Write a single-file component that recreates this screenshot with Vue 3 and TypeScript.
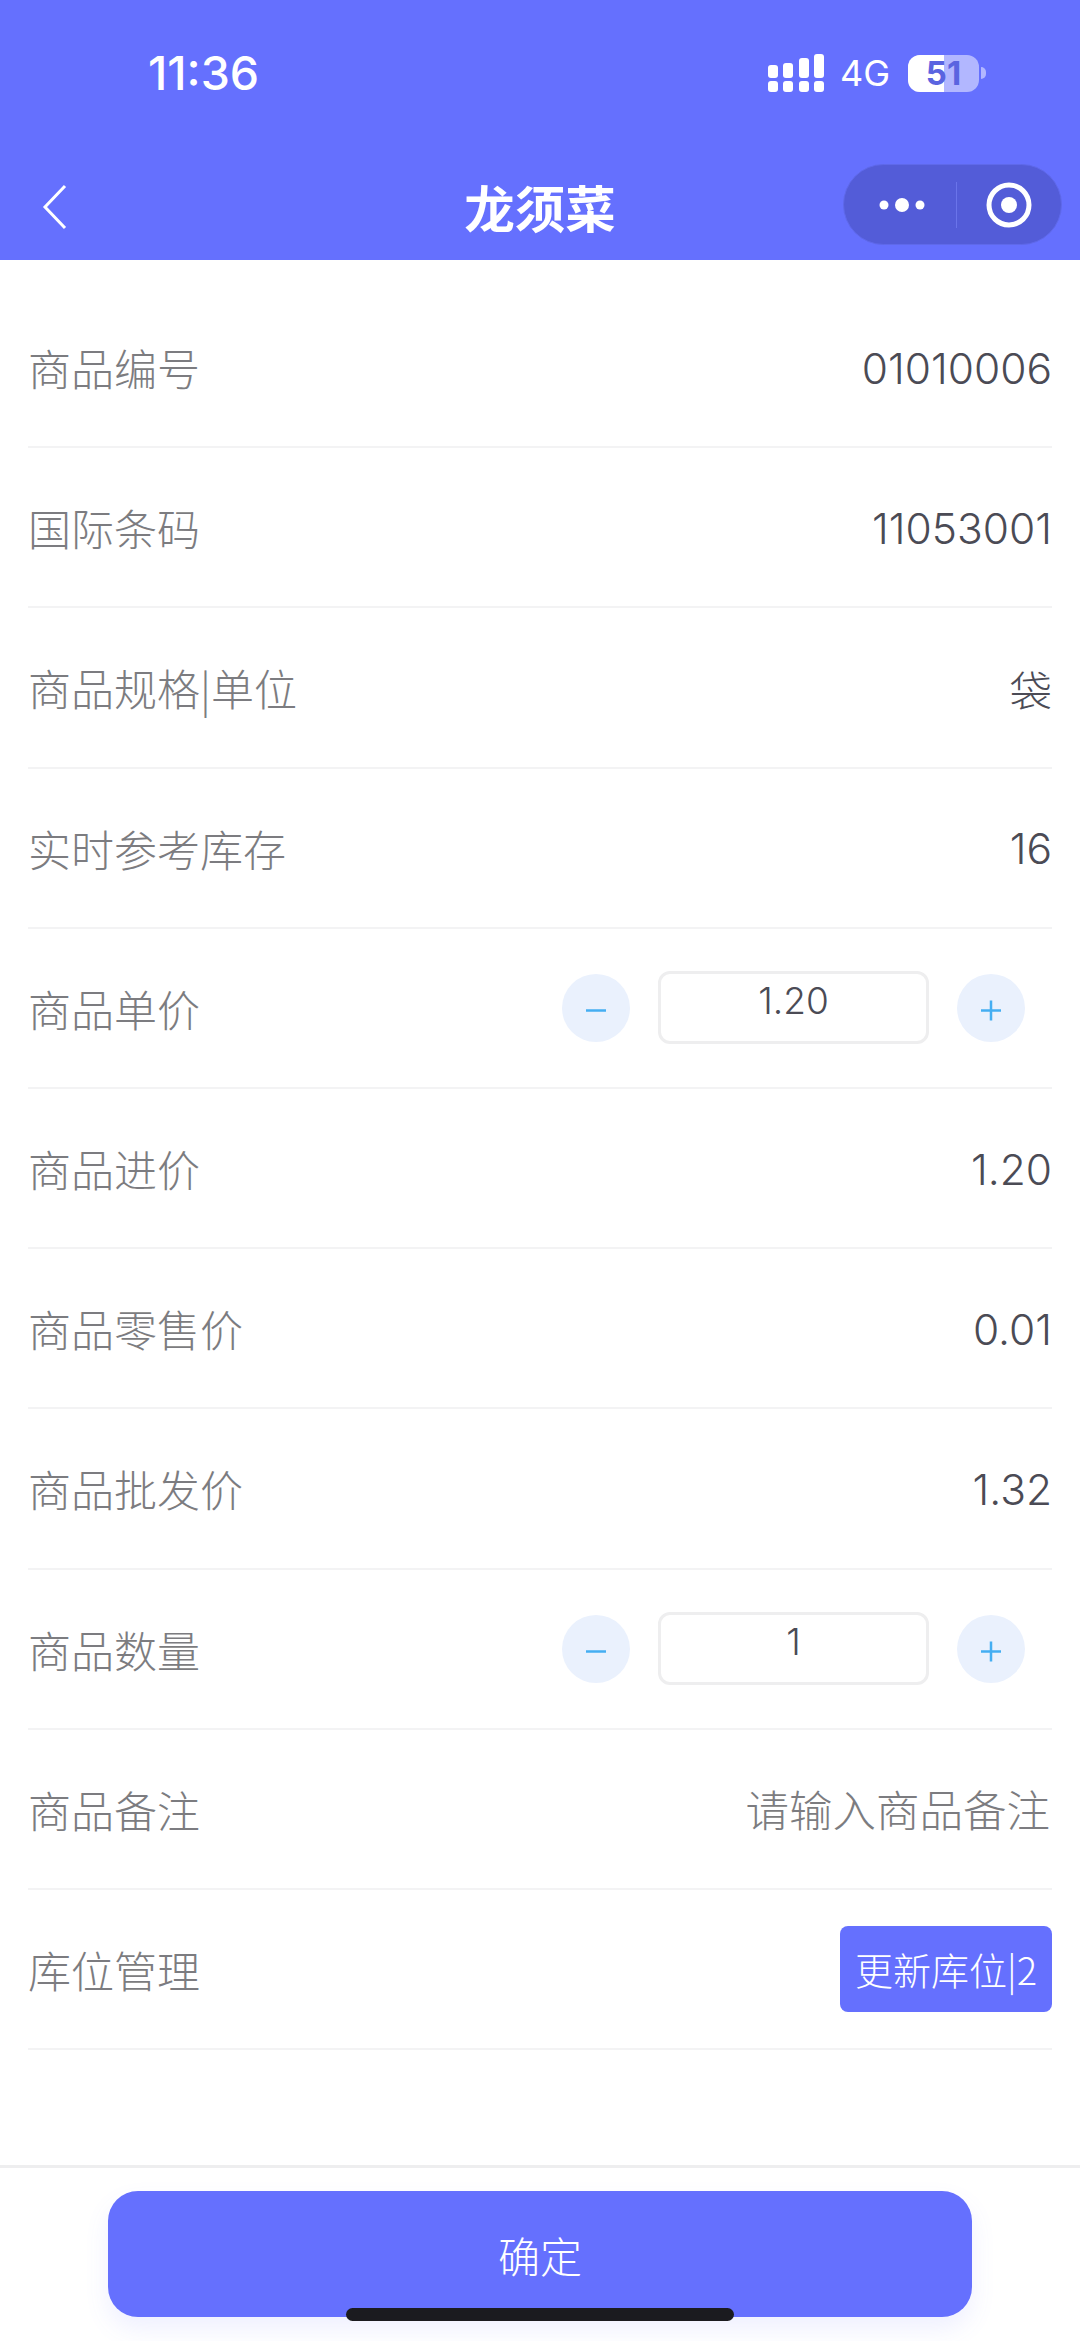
<script setup lang="ts">
interface Row {
  label: string
  value?: string
  kind?: 'stepper' | 'placeholder' | 'button'
}

const rows: Row[] = [
  { label: '商品编号', value: '01010006' },
  { label: '国际条码', value: '11053001' },
  { label: '商品规格|单位', value: '袋' },
  { label: '实时参考库存', value: '16' },
  { label: '商品单价', value: '1.20', kind: 'stepper' },
  { label: '商品进价', value: '1.20' },
  { label: '商品零售价', value: '0.01' },
  { label: '商品批发价', value: '1.32' },
  { label: '商品数量', value: '1', kind: 'stepper' },
  { label: '商品备注', value: '请输入商品备注', kind: 'placeholder' },
  { label: '库位管理', value: '更新库位|2', kind: 'button' },
]

const signal = [
  { x: 0, h: 13 },
  { x: 15, h: 15 },
  { x: 31, h: 20 },
  { x: 46, h: 24 },
]
</script>

<template>
  <div class="page">
    <header class="head">
      <div class="status">
        <span class="time">11:36</span>
        <div class="status__right">
          <svg class="signal" width="56" height="38" viewBox="0 0 56 38">
            <g v-for="s in signal" :key="s.x" fill="#fff">
              <rect :x="s.x" :y="24 - s.h" width="10" :height="s.h" rx="3" />
              <rect :x="s.x" y="27" width="10" height="11" rx="3" />
            </g>
          </svg>
          <span class="net">4G</span>
          <div class="battery">
            <div class="battery__body">
              <div class="battery__level"></div>
              <span class="battery__num">51</span>
            </div>
            <div class="battery__tip"></div>
          </div>
        </div>
      </div>
      <div class="nav">
        <svg class="back" width="26" height="46" viewBox="0 0 26 46" fill="none">
          <path d="M23 2 L3 23 L23 44" stroke="#fff" stroke-width="3" />
        </svg>
        <h1 class="title">龙须菜</h1>
        <div class="capsule">
          <svg width="48" height="16" viewBox="0 0 48 16" fill="#fff">
            <circle cx="6" cy="8" r="4.5" />
            <circle cx="24" cy="8" r="7" />
            <circle cx="42" cy="8" r="4.5" />
          </svg>
          <div class="capsule__line"></div>
          <svg width="46" height="46" viewBox="0 0 46 46" fill="none">
            <circle cx="23" cy="23" r="20" stroke="#fff" stroke-width="5" />
            <circle cx="23" cy="23" r="8" fill="#fff" />
          </svg>
        </div>
      </div>
    </header>

    <main class="list">
      <div v-for="row in rows" :key="row.label" class="row">
        <span class="row__label">{{ row.label }}</span>
        <div v-if="row.kind === 'stepper'" class="stepper">
          <button class="stepper__btn">
            <svg width="22" height="22" viewBox="0 0 22 22"><path d="M1 11.5h20" stroke="#45aef2" stroke-width="2.5" /></svg>
          </button>
          <div class="stepper__input">{{ row.value }}</div>
          <button class="stepper__btn">
            <svg width="22" height="22" viewBox="0 0 22 22"><path d="M1 11.5h20M11 1.500v20" stroke="#45aef2" stroke-width="2.500" /></svg>
          </button>
        </div>
        <span v-else-if="row.kind === 'placeholder'" class="row__hint">{{ row.value }}</span>
        <button v-else-if="row.kind === 'button'" class="row__btn">{{ row.value }}</button>
        <span v-else class="row__value">{{ row.value }}</span>
      </div>
    </main>

    <footer class="foot">
      <button class="confirm">确定</button>
    </footer>
    <div class="home"></div>
  </div>
</template>

<style>
html,
body {
  margin: 0;
  background: #fff;
}
</style>

<style scoped>
.page {
  position: relative;
  width: 1080px;
  height: 2341px;
  display: flex;
  flex-direction: column;
  overflow: hidden;
  background: #fff;
  font-family: Inter, "Noto Sans CJK SC", sans-serif;
}

.head {
  height: 260px;
  flex: none;
  background: #6570fe;
  color: #fff;
}
.status {
  height: 150px;
  padding: 0 94px 0 148px;
  display: flex;
  justify-content: space-between;
  align-items: center;
  box-sizing: border-box;
}
.time {
  font-size: 46.500px;
  font-weight: 500;
  margin-top: -4px;
}
.status__right {
  display: flex;
  align-items: center;
  margin-top: -4px;
}
.net {
  font-size: 36px;
  margin-left: 16px;
}
.battery {
  display: flex;
  align-items: center;
  margin-left: 18px;
}
.battery__body {
  position: relative;
  width: 71px;
  height: 37px;
  border-radius: 12px;
  overflow: hidden;
  background: #b2b7ff;
  display: flex;
  justify-content: center;
  align-items: center;
}
.battery__level {
  position: absolute;
  left: 0;
  top: 0;
  bottom: 0;
  width: 36px;
  background: #fff;
}
.battery__num {
  position: relative;
  font-size: 33px;
  font-weight: 700;
  color: #5a64e0;
}
.battery__tip {
  width: 5px;
  height: 12px;
  margin-left: 2px;
  border-radius: 0 6px 6px 0;
  background: #b2b7ff;
}

.nav {
  position: relative;
  height: 110px;
  display: flex;
  align-items: center;
  justify-content: center;
}
.back {
  position: absolute;
  left: 42px;
  top: 34px;
}
.title {
  margin: 0;
  font-family: "Noto Sans CJK SC", sans-serif;
  font-size: 50.500px;
  font-weight: 700;
  line-height: 1;
  margin-top: 3px;
}
.capsule {
  position: absolute;
  left: 843px;
  top: 14px;
  width: 219px;
  height: 81px;
  box-sizing: border-box;
  padding: 0 29px 0 34px;
  border-radius: 41px;
  background: #535cd8;
  border: 1px solid #5f69ea;
  display: flex;
  align-items: center;
  justify-content: space-between;
}
.capsule__line {
  width: 1px;
  height: 46px;
  background: #6a74ea;
}

.list {
  flex: 1;
  padding: 28px 28px 0;
}
.row {
  height: 160.2px;
  box-sizing: border-box;
  border-bottom: 2px solid #f3f3f4;
  display: flex;
  align-items: center;
  justify-content: space-between;
  font-family: "Noto Sans CJK SC", sans-serif;
  font-size: 43px;
}
.row__label {
  color: #7c7c80;
  font-weight: 300;
}
.row__value {
  font-family: Inter, "Noto Sans CJK SC", sans-serif;
  font-size: 42.500px;
  color: #4b4b55;
  font-weight: 300;
  padding-top: 2px;
}
.row__hint {
  color: #7c7c80;
  font-size: 43.500px;
  font-weight: 300;
  margin-right: 2px;
}
.row__btn {
  width: 212px;
  height: 86px;
  padding: 0;
  border: none;
  border-radius: 8px;
  background: #6570fe;
  color: #fff;
  font-family: "Noto Sans CJK SC", sans-serif;
  font-size: 38px;
  font-weight: 300;
  white-space: nowrap;
}

.stepper {
  display: flex;
  align-items: center;
  padding-right: 27px;
}
.stepper__btn {
  width: 68px;
  height: 68px;
  padding: 0;
  border: none;
  border-radius: 50%;
  background: #eaf1fd;
  display: flex;
  align-items: center;
  justify-content: center;
}
.stepper__btn svg {
  margin-top: 5px;
}
.stepper__input {
  width: 271px;
  height: 73px;
  margin: 0 28px;
  box-sizing: border-box;
  border: 3px solid #eeeeef;
  border-radius: 12px;
  font-family: Inter, sans-serif;
  color: #4b4b55;
  font-size: 37px;
  font-weight: 300;
  line-height: 53px;
  text-align: center;
}

.foot {
  height: 176px;
  flex: none;
  box-sizing: border-box;
  border-top: 3px solid #eeeeef;
  padding: 23px 108px 0;
}
.confirm {
  width: 100%;
  height: 126px;
  border: none;
  border-radius: 30px;
  background: #6570fe;
  color: #fff;
  font-family: "Noto Sans CJK SC", sans-serif;
  font-size: 42px;
  font-weight: 300;
  box-shadow: 0 12px 24px rgba(101, 112, 254, 0.1);
}

.home {
  position: absolute;
  left: 346px;
  bottom: 20px;
  width: 388px;
  height: 13px;
  border-radius: 7px;
  background: #1b1b1f;
}
</style>
